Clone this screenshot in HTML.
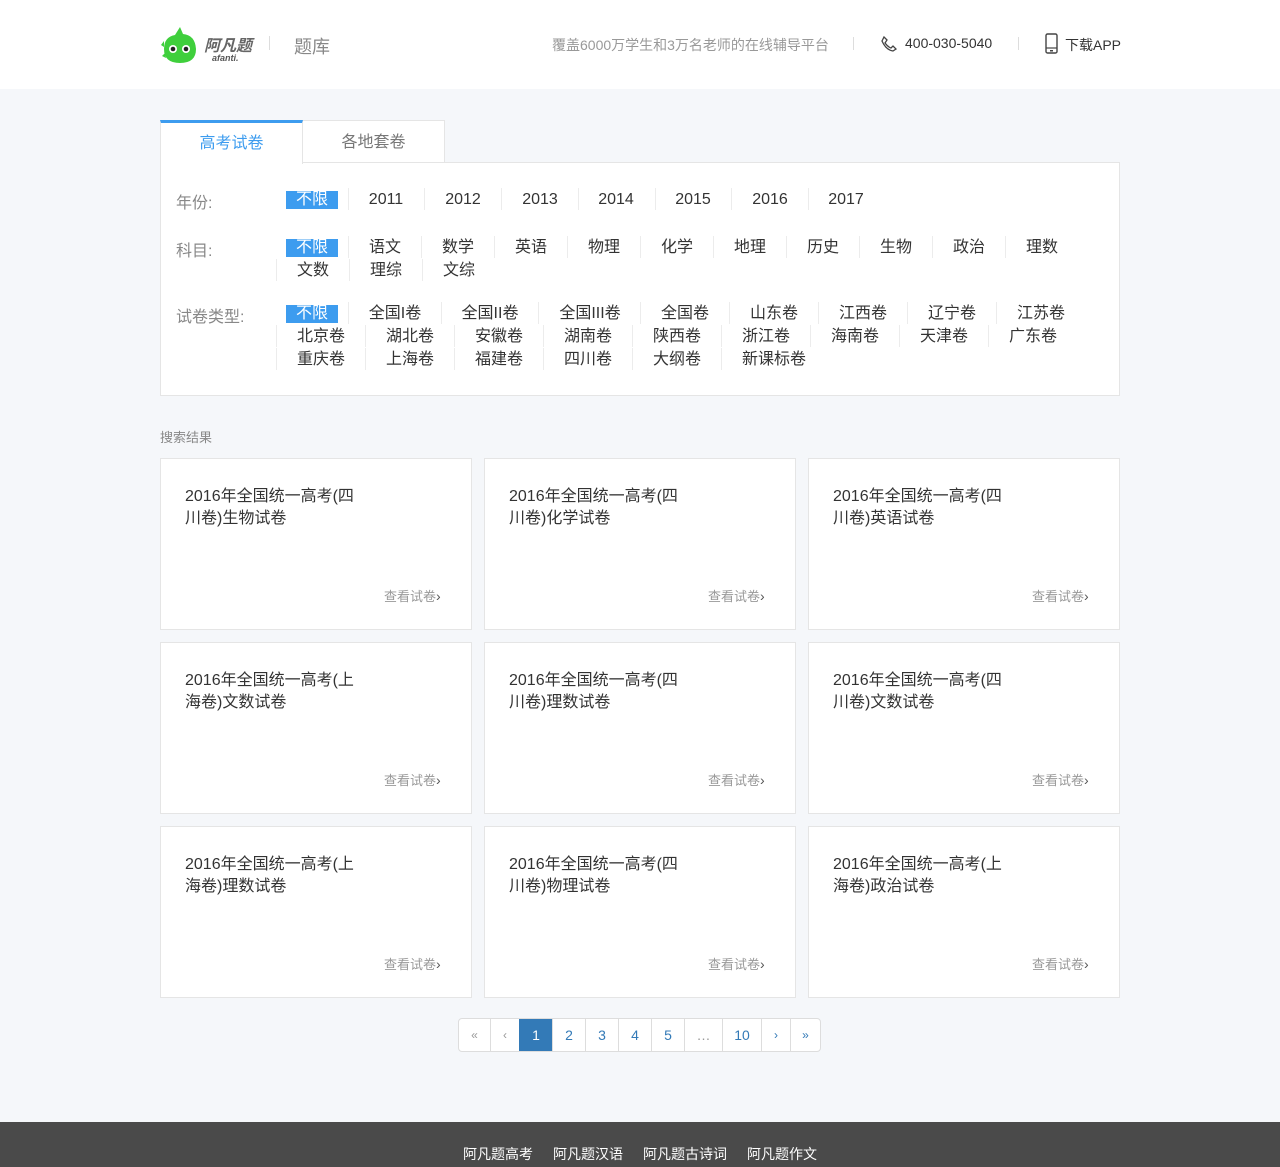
<!DOCTYPE html>
<html><head><meta charset="utf-8">
<style>
*{margin:0;padding:0;box-sizing:border-box}
body{width:1280px;height:1167px;background:#f5f7fa;font-family:"Liberation Sans","Noto Sans CJK SC",sans-serif;position:relative;overflow:hidden;color:#333}
.hdr{position:absolute;left:0;top:0;width:1280px;height:89px;background:#fff}
.a{position:absolute;white-space:nowrap}
.tab{position:absolute;top:120px;height:43px;width:143px;background:#fff;border:1px solid #e5e5e5;text-align:center;line-height:42px;font-size:16px;color:#777}
.box{position:absolute;left:160px;top:162px;width:960px;height:234px;background:#fff;border:1px solid #e5e5e5}
.lbl{position:absolute;left:176px;font-size:16px;color:#888}
.it{position:absolute;width:80px;margin-left:-40px;text-align:center;font-size:16px;color:#333;line-height:20px}
.sel{position:absolute;left:286px;width:52px;height:18px;background:#3d9cef;color:#fff;text-align:center;font-size:16px;line-height:18px}
.sp{position:absolute;width:1px;height:22px;background:#ececec}
.card{position:absolute;width:312px;height:172px;background:#fff;border:1px solid #e5e5e5}
.card .t{position:absolute;left:24px;top:27px;width:180px;font-size:16px;line-height:22px;color:#333}
.card .v{position:absolute;left:223px;top:127px;font-size:13px;color:#999}
.card .v b{font-weight:normal;color:#555;font-size:14px}
.pg{position:absolute;left:458px;top:1018px;height:34px;display:flex;border:1px solid #ddd;border-radius:4px;background:#fff;overflow:hidden}
.pg span{display:block;height:32px;line-height:32px;text-align:center;font-size:14px;color:#337ab7;border-left:1px solid #ddd}
.pg span:first-child{border-left:none}
.ft{position:absolute;left:0;top:1122px;width:1280px;height:45px;background:#4a4a4a}
.ft span{position:absolute;top:22px;color:#fff;font-size:14px}
</style></head><body>
<div class="hdr">
<svg class="a" style="left:161px;top:25px" width="38" height="40" viewBox="0 0 38 40"><path d="M19 2 L22 9 Q34 10 35 24 Q35 38 19 38 Q3 38 3 24 Q3 12 14 10 Z" fill="#3fcf3c"/><path d="M3 16 L0 20 L3 22 M4 28 L1 31 L5 33" fill="#3fcf3c"/><circle cx="12" cy="24" r="4" fill="#fff"/><circle cx="25" cy="24" r="4" fill="#fff"/><circle cx="12" cy="24" r="2.3" fill="#222"/><circle cx="25" cy="24" r="2.3" fill="#222"/></svg>
<div class="a" style="left:204px;top:32px;font-size:16px;font-weight:bold;font-style:italic;color:#666">阿凡题</div>
<div class="a" style="left:212px;top:53px;font-size:9px;font-style:italic;color:#555;font-weight:bold">afanti.</div>
<div class="a" style="left:269px;top:36px;width:1px;height:14px;background:#ddd"></div>
<div class="a" style="left:294px;top:33px;font-size:18px;color:#888">题库</div>
<div class="a" style="left:552px;top:35px;font-size:14px;color:#999">覆盖6000万学生和3万名老师的在线辅导平台</div>
<div class="a" style="left:853px;top:37px;width:1px;height:13px;background:#ddd"></div>
<svg class="a" style="left:880px;top:35px" width="18" height="18" viewBox="0 0 18 18"><path d="M4 2 L7 5 L5 8 Q8 12 11 13 L13 11 L16 14 L13 16 Q6 15 2 6 Z" fill="none" stroke="#444" stroke-width="1.3"/></svg>
<div class="a" style="left:905px;top:35px;font-size:14px;color:#333">400-030-5040</div>
<div class="a" style="left:1018px;top:37px;width:1px;height:13px;background:#ddd"></div>
<svg class="a" style="left:1044px;top:33px" width="16" height="22" viewBox="0 0 16 22"><rect x="2" y="1" width="11" height="19" rx="1.5" fill="none" stroke="#444" stroke-width="1.4"/><line x1="2" y1="15" x2="13" y2="15" stroke="#444" stroke-width="1.2"/><rect x="6" y="17" width="3" height="1.5" fill="#444"/></svg>
<div class="a" style="left:1065px;top:35px;font-size:14px;color:#333">下载APP</div>
</div>

<div class="box"></div>
<div class="tab" style="left:160px;border-top:3px solid #3d9cef;color:#3d9cef;border-bottom:none;height:44px;line-height:42px;z-index:2">高考试卷</div>
<div class="tab" style="left:302px;line-height:44px">各地套卷</div>

<div class="lbl" style="top:189px">年份:</div>
<div class="sel" style="top:191px">不限</div>
<div class="sp" style="left:348px;top:188px"></div><div class="sp" style="left:424px;top:188px"></div><div class="sp" style="left:501px;top:188px"></div><div class="sp" style="left:578px;top:188px"></div><div class="sp" style="left:655px;top:188px"></div><div class="sp" style="left:731px;top:188px"></div><div class="sp" style="left:808px;top:188px"></div>
<div class="it" style="left:386px;top:190px">2011</div><div class="it" style="left:463px;top:190px">2012</div><div class="it" style="left:540px;top:190px">2013</div><div class="it" style="left:616px;top:190px">2014</div><div class="it" style="left:693px;top:190px">2015</div><div class="it" style="left:770px;top:190px">2016</div><div class="it" style="left:846px;top:190px">2017</div>

<div class="lbl" style="top:237px">科目:</div>
<div class="sel" style="top:239px">不限</div>
<div class="sp" style="left:348px;top:236px"></div><div class="sp" style="left:421px;top:236px"></div><div class="sp" style="left:494px;top:236px"></div><div class="sp" style="left:567px;top:236px"></div><div class="sp" style="left:640px;top:236px"></div><div class="sp" style="left:713px;top:236px"></div><div class="sp" style="left:786px;top:236px"></div><div class="sp" style="left:859px;top:236px"></div><div class="sp" style="left:932px;top:236px"></div><div class="sp" style="left:1005px;top:236px"></div>
<div class="it" style="left:385px;top:238px">语文</div><div class="it" style="left:458px;top:238px">数学</div><div class="it" style="left:531px;top:238px">英语</div><div class="it" style="left:604px;top:238px">物理</div><div class="it" style="left:677px;top:238px">化学</div><div class="it" style="left:750px;top:238px">地理</div><div class="it" style="left:823px;top:238px">历史</div><div class="it" style="left:896px;top:238px">生物</div><div class="it" style="left:969px;top:238px">政治</div><div class="it" style="left:1042px;top:238px">理数</div>
<div class="sp" style="left:276px;top:259px"></div><div class="sp" style="left:349px;top:259px"></div><div class="sp" style="left:422px;top:259px"></div>
<div class="it" style="left:313px;top:261px">文数</div><div class="it" style="left:386px;top:261px">理综</div><div class="it" style="left:459px;top:261px">文综</div>

<div class="lbl" style="top:303px">试卷类型:</div>
<div class="sel" style="top:305px">不限</div>
<div class="sp" style="left:348px;top:302px"></div><div class="sp" style="left:441px;top:302px"></div><div class="sp" style="left:538px;top:302px"></div><div class="sp" style="left:640px;top:302px"></div><div class="sp" style="left:729px;top:302px"></div><div class="sp" style="left:818px;top:302px"></div><div class="sp" style="left:907px;top:302px"></div><div class="sp" style="left:996px;top:302px"></div>
<div class="it" style="left:395px;top:304px">全国I卷</div><div class="it" style="left:490px;top:304px">全国II卷</div><div class="it" style="left:590px;top:304px">全国III卷</div><div class="it" style="left:685px;top:304px">全国卷</div><div class="it" style="left:774px;top:304px">山东卷</div><div class="it" style="left:863px;top:304px">江西卷</div><div class="it" style="left:952px;top:304px">辽宁卷</div><div class="it" style="left:1041px;top:304px">江苏卷</div>
<div class="sp" style="left:276px;top:325px"></div><div class="sp" style="left:365px;top:325px"></div><div class="sp" style="left:454px;top:325px"></div><div class="sp" style="left:543px;top:325px"></div><div class="sp" style="left:632px;top:325px"></div><div class="sp" style="left:721px;top:325px"></div><div class="sp" style="left:810px;top:325px"></div><div class="sp" style="left:899px;top:325px"></div><div class="sp" style="left:988px;top:325px"></div>
<div class="it" style="left:321px;top:327px">北京卷</div><div class="it" style="left:410px;top:327px">湖北卷</div><div class="it" style="left:499px;top:327px">安徽卷</div><div class="it" style="left:588px;top:327px">湖南卷</div><div class="it" style="left:677px;top:327px">陕西卷</div><div class="it" style="left:766px;top:327px">浙江卷</div><div class="it" style="left:855px;top:327px">海南卷</div><div class="it" style="left:944px;top:327px">天津卷</div><div class="it" style="left:1033px;top:327px">广东卷</div>
<div class="sp" style="left:276px;top:348px"></div><div class="sp" style="left:365px;top:348px"></div><div class="sp" style="left:454px;top:348px"></div><div class="sp" style="left:543px;top:348px"></div><div class="sp" style="left:632px;top:348px"></div><div class="sp" style="left:721px;top:348px"></div>
<div class="it" style="left:321px;top:350px">重庆卷</div><div class="it" style="left:410px;top:350px">上海卷</div><div class="it" style="left:499px;top:350px">福建卷</div><div class="it" style="left:588px;top:350px">四川卷</div><div class="it" style="left:677px;top:350px">大纲卷</div><div class="it" style="left:774px;top:350px">新课标卷</div>

<div class="a" style="left:160px;top:427px;font-size:13px;color:#888">搜索结果</div>

<div class="card" style="left:160px;top:458px"><div class="t">2016年全国统一高考(四川卷)生物试卷</div><div class="v">查看试卷<b>›</b></div></div>
<div class="card" style="left:484px;top:458px"><div class="t">2016年全国统一高考(四川卷)化学试卷</div><div class="v">查看试卷<b>›</b></div></div>
<div class="card" style="left:808px;top:458px"><div class="t">2016年全国统一高考(四川卷)英语试卷</div><div class="v">查看试卷<b>›</b></div></div>
<div class="card" style="left:160px;top:642px"><div class="t">2016年全国统一高考(上海卷)文数试卷</div><div class="v">查看试卷<b>›</b></div></div>
<div class="card" style="left:484px;top:642px"><div class="t">2016年全国统一高考(四川卷)理数试卷</div><div class="v">查看试卷<b>›</b></div></div>
<div class="card" style="left:808px;top:642px"><div class="t">2016年全国统一高考(四川卷)文数试卷</div><div class="v">查看试卷<b>›</b></div></div>
<div class="card" style="left:160px;top:826px"><div class="t">2016年全国统一高考(上海卷)理数试卷</div><div class="v">查看试卷<b>›</b></div></div>
<div class="card" style="left:484px;top:826px"><div class="t">2016年全国统一高考(四川卷)物理试卷</div><div class="v">查看试卷<b>›</b></div></div>
<div class="card" style="left:808px;top:826px"><div class="t">2016年全国统一高考(上海卷)政治试卷</div><div class="v">查看试卷<b>›</b></div></div>

<div class="pg">
<span style="width:31px;color:#999;font-size:12px">«</span><span style="width:29px;color:#999;font-size:12px">‹</span><span style="width:33px;background:#337ab7;color:#fff;border-color:#337ab7">1</span><span style="width:33px">2</span><span style="width:33px">3</span><span style="width:33px">4</span><span style="width:33px">5</span><span style="width:38px;color:#999">…</span><span style="width:39px">10</span><span style="width:29px;font-size:12px">›</span><span style="width:30px;font-size:12px">»</span>
</div>

<div class="ft"><span style="left:463px">阿凡题高考</span><span style="left:553px">阿凡题汉语</span><span style="left:643px">阿凡题古诗词</span><span style="left:747px">阿凡题作文</span></div>
</body></html>
